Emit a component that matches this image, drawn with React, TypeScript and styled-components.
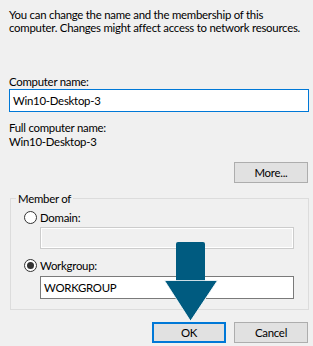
import React from 'react';
import styled, { createGlobalStyle } from 'styled-components';

const GlobalStyle = createGlobalStyle`
  html, body {
    margin: 0;
    padding: 0;
    background: #f0f0f0;
  }
  * {
    box-sizing: border-box;
  }
`;

const Page = styled.div`
  position: relative;
  width: 313px;
  height: 346px;
  display: flex;
  flex-direction: column;
  padding: 8px 4px 0 9px;
  background: #f0f0f0;
  color: #000;
  font-family: Lato, 'Liberation Sans', Arial, sans-serif;
  font-size: 11.4px;
  letter-spacing: -0.25px;
  line-height: 13px;
  overflow: hidden;
`;

const Text = styled.div<{ $top?: number }>`
  margin-top: ${(p) => p.$top ?? 0}px;
  white-space: nowrap;
`;

const TextBox = styled.div<{ $focused?: boolean; $disabled?: boolean; $top?: number }>`
  margin-top: ${(p) => p.$top ?? 0}px;
  height: ${(p) => (p.$disabled ? 22 : 23)}px;
  display: flex;
  align-items: center;
  padding: 0 3px;
  background: ${(p) => (p.$disabled ? '#f0f0f0' : '#fff')};
  border: 1px solid
    ${(p) => (p.$focused ? '#0078d7' : p.$disabled ? '#cccccc' : '#7a7a7a')};
  box-shadow: ${(p) => (p.$disabled ? 'inset 0 0 0 1px #fff' : 'none')};
`;

const ButtonRow = styled.div<{ $top: number }>`
  margin-top: ${(p) => p.$top}px;
  display: flex;
  justify-content: flex-end;
  gap: 8px;
  padding-right: 1px;
`;

const Button = styled.div<{ $default?: boolean }>`
  width: 74px;
  height: 21px;
  display: flex;
  align-items: center;
  justify-content: center;
  background: #e1e1e1;
  border: ${(p) => (p.$default ? '2px solid #0078d7' : '1px solid #adadad')};
`;

const Group = styled.fieldset`
  margin: 9px 0 0 1px;
  padding: 0 14px 10px 13px;
  border: 1px solid #dcdcdc;
  min-width: 0;
`;

const Legend = styled.legend`
  margin-left: -8px;
  padding: 0 2px;
`;

const RadioRow = styled.div<{ $top: number }>`
  margin-top: ${(p) => p.$top}px;
  display: flex;
  align-items: center;
  gap: 3px;
  height: 13px;
`;

const Radio = styled.span<{ $checked?: boolean }>`
  width: 13px;
  height: 13px;
  border-radius: 50%;
  border: 1px solid #333;
  background: #fff;
  display: flex;
  align-items: center;
  justify-content: center;

  &::after {
    content: '';
    width: 7px;
    height: 7px;
    border-radius: 50%;
    background: ${(p) => (p.$checked ? '#333' : 'transparent')};
  }
`;

const Indented = styled.div`
  margin-left: 16px;
`;

const Arrow = styled.svg`
  position: absolute;
  left: 164px;
  top: 242px;
`;

export default function App() {
  return (
    <Page>
      <GlobalStyle />
      <Text>You can change the name and the membership of this</Text>
      <Text>computer. Changes might affect access to network resources.</Text>

      <Text $top={41}>Computer name:</Text>
      <TextBox $focused $top={1}>Win10-Desktop-3</TextBox>

      <Text $top={9}>Full computer name:</Text>
      <Text $top={1}>Win10-Desktop-3</Text>

      <ButtonRow $top={14}>
        <Button>More...</Button>
      </ButtonRow>

      <Group>
        <Legend>Member of</Legend>
        <RadioRow $top={6}>
          <Radio />
          <span>Domain:</span>
        </RadioRow>
        <Indented>
          <TextBox $disabled $top={3} />
        </Indented>
        <RadioRow $top={10}>
          <Radio $checked />
          <span>Workgroup:</span>
        </RadioRow>
        <Indented>
          <TextBox $top={4}>WORKGROUP</TextBox>
        </Indented>
      </Group>

      <ButtonRow $top={12}>
        <Button $default>OK</Button>
        <Button>Cancel</Button>
      </ButtonRow>

      <Arrow width="54" height="80" viewBox="0 0 54 80">
        <path d="M12 40 V2 Q12 0 14 0 H39 Q41 0 41 2 V40 Z" fill="#005b80" />
        <path d="M0.5 38.5 H53.5 L26.5 79 Z" fill="#005b80" stroke="#ffffff" strokeWidth="0.8" />
      </Arrow>
    </Page>
  );
}
